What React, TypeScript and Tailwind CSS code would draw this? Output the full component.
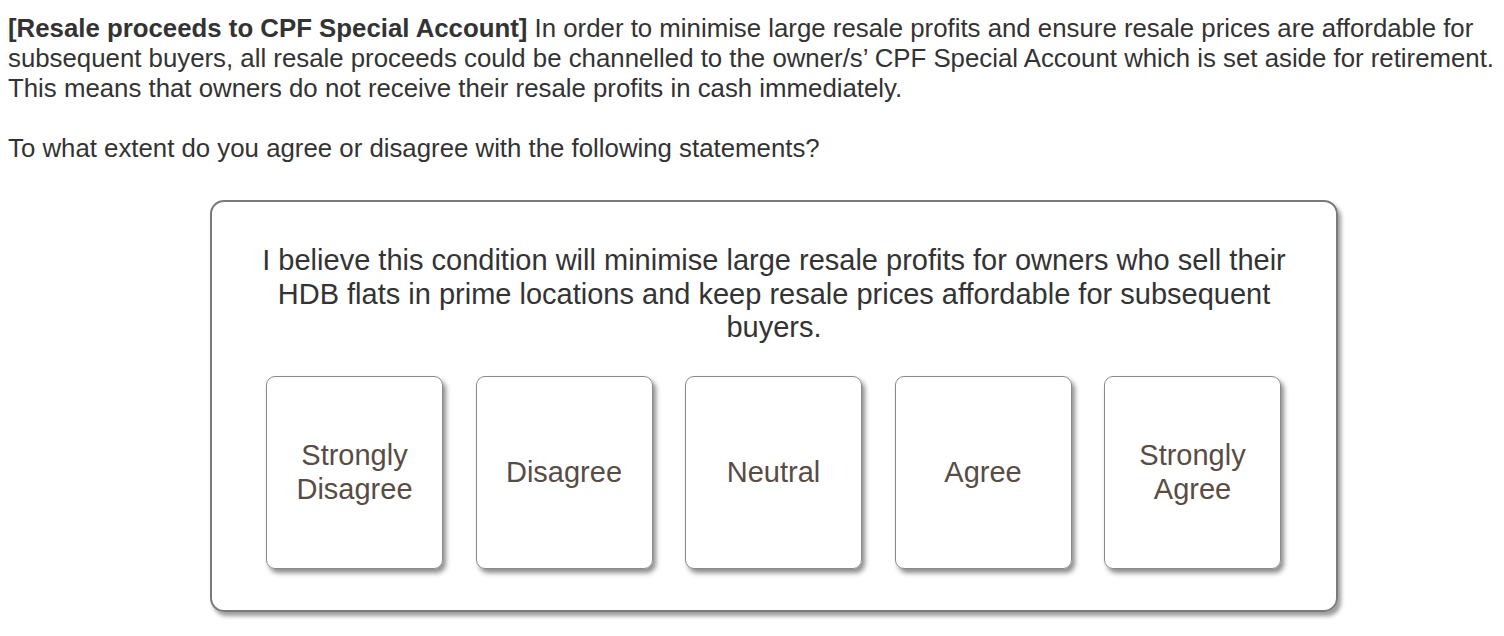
import React from "react";

const options = [
  ["Strongly", "Disagree"],
  ["Disagree"],
  ["Neutral"],
  ["Agree"],
  ["Strongly", "Agree"],
];

export default function App() {
  return (
    <div
      className="w-[1504px] h-[636px] bg-white overflow-hidden text-[#333333]"
      style={{ fontFamily: '"Liberation Sans", Arial, sans-serif' }}
    >
      <div className="pl-[8px] pt-[13px] text-[25.8px] leading-[30px]">
        <p>
          <b>[Resale proceeds to CPF Special Account]</b> In order to minimise large resale
          profits and ensure resale prices are affordable for subsequent buyers, all resale
          proceeds could be channelled to the owner/s’ CPF Special Account which is set aside
          for retirement. This means that owners do not receive their resale profits in cash
          immediately.
        </p>
        <p className="mt-[30px]">To what extent do you agree or disagree with the following statements?</p>
      </div>
      <div className="pl-[210px] pt-[37px]">
        <div className="w-[1128px] h-[412px] border-2 border-[#7a7a7a] rounded-[14px] shadow-[3px_4px_4px_rgba(0,0,0,0.4)] flex flex-col items-center">
          <p className="mt-[42px] w-[1050px] text-center text-[29px] leading-[33.5px]">
            I believe this condition will minimise large resale profits for owners who sell their
            HDB flats in prime locations and keep resale prices affordable for subsequent buyers.
          </p>
          <div className="mt-[31px] flex gap-[32.5px] mr-[1px]">
            {options.map((o, i) => (
              <div
                key={i}
                className="w-[177px] h-[193px] border border-[#8a8a8a] rounded-[9px] shadow-[3px_4px_5px_rgba(0,0,0,0.45)] flex flex-col items-center justify-center text-[29px] leading-[34px] text-[#584c45] text-center"
              >
                {o.map((l) => (
                  <span key={l}>{l}</span>
                ))}
              </div>
            ))}
          </div>
        </div>
      </div>
    </div>
  );
}
